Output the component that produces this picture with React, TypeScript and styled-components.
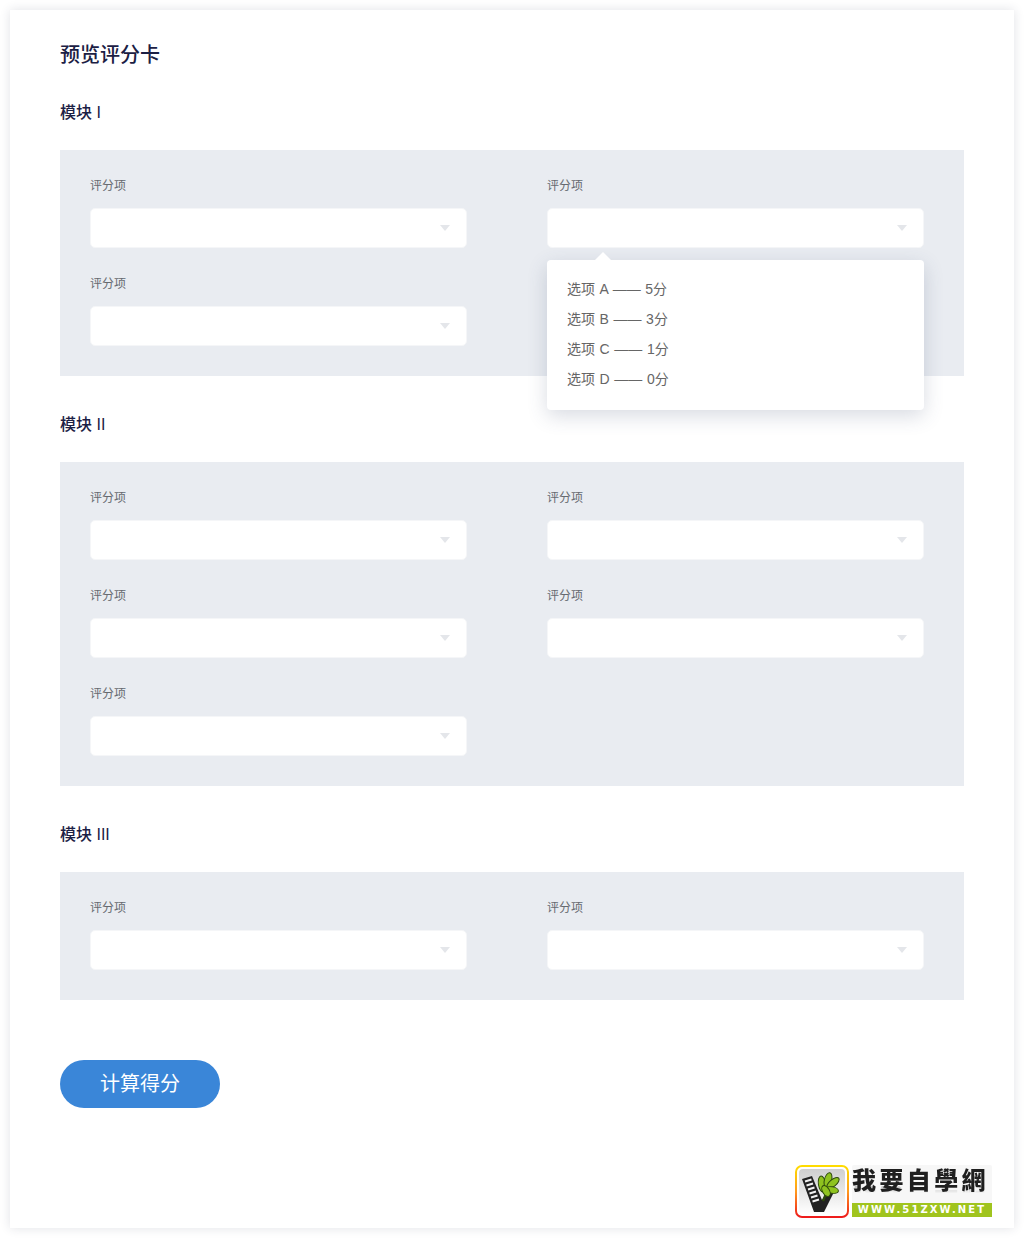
import React from "react";
import styled, { createGlobalStyle } from "styled-components";

const Global = createGlobalStyle`
  html, body { margin: 0; padding: 0; background: #ffffff; }
  body { font-family: "Liberation Sans", "Noto Sans CJK SC", sans-serif; }
`;

const Page = styled.div`
  box-sizing: border-box;
  width: 1024px;
  height: 1238px;
  padding: 10px;
`;

const Card = styled.main`
  position: relative;
  box-sizing: border-box;
  width: 1004px;
  height: 1218px;
  padding: 31px 50px 30px;
  background: #fff;
  box-shadow: 0 0 10px rgba(40, 50, 80, 0.14);
`;

const Title = styled.h1`
  margin: 0;
  font-size: 20px;
  line-height: 28px;
  font-weight: 500;
  color: #1b2044;
`;

const SectionTitle = styled.h2<{ $first?: boolean }>`
  margin: ${(p) => (p.$first ? "33px" : "38px")} 0 26px;
  font-size: 16px;
  line-height: 22px;
  font-weight: 500;
  color: #1b2044;
`;

const Panel = styled.section`
  display: grid;
  grid-template-columns: 377px 377px;
  column-gap: 80px;
  row-gap: 28px;
  padding: 28px 40px 30px 30px;
  background: #e9ecf1;
`;

const Field = styled.div`
  position: relative;
`;

const Label = styled.div`
  padding-top: 1px;
  margin-bottom: 15px;
  font-size: 12px;
  line-height: 14px;
  color: #666a70;
`;

const Select = styled.div`
  position: relative;
  box-sizing: border-box;
  height: 40px;
  background: #fff;
  border: 1px solid #f5f6f8;
  border-radius: 5px;
`;

const Caret = styled.span`
  position: absolute;
  right: 16px;
  top: 16px;
  width: 0;
  height: 0;
  border-left: 5px solid transparent;
  border-right: 5px solid transparent;
  border-top: 6px solid #e4e6ea;
`;

const Menu = styled.ul`
  position: absolute;
  z-index: 2;
  left: 0;
  top: 82px;
  box-sizing: border-box;
  width: 377px;
  height: 150px;
  margin: 0;
  padding: 14px 20px;
  list-style: none;
  background: #fff;
  border-radius: 4px;
  box-shadow: 0 6px 20px rgba(60, 75, 110, 0.2);

  &::before {
    content: "";
    position: absolute;
    left: 48px;
    top: -8px;
    width: 0;
    height: 0;
    border-left: 8px solid transparent;
    border-right: 8px solid transparent;
    border-bottom: 8px solid #fff;
  }
`;

const MenuItem = styled.li`
  font-size: 14px;
  line-height: 30px;
  color: #666;
  white-space: nowrap;
  word-spacing: 0.7px;
`;

const Submit = styled.button`
  display: block;
  width: 160px;
  height: 48px;
  margin-top: 60px;
  padding: 0;
  border: 0;
  border-radius: 24px;
  background: #3a86d8;
  color: #fff;
  font: 400 20px/48px "Liberation Sans", "Noto Sans CJK SC", sans-serif;
`;

const Watermark = styled.div`
  position: absolute;
  left: 785px;
  top: 1155px;
  display: flex;
  gap: 3px;
  align-items: stretch;
`;

const LogoWords = styled.div`
  display: flex;
  flex-direction: column;
  justify-content: space-between;
  width: 140px;
  height: 52px;
  background: #f7f7f7;
  border-radius: 2px;
`;

const LogoName = styled.div`
  font: 900 24px/28px "Noto Sans CJK TC", sans-serif;
  letter-spacing: 3.4px;
  color: #1f1f1f;
  white-space: nowrap;
  -webkit-box-reflect: below -8px linear-gradient(transparent 70%, rgba(255, 255, 255, 0.3));
`;

const LogoUrl = styled.div`
  height: 14px;
  background: #a0c41e;
  color: #fff;
  font: 700 10px/14px "DejaVu Sans", sans-serif;
  letter-spacing: 2.1px;
  text-align: center;
  white-space: nowrap;
`;

const options = ["选项 A —— 5分", "选项 B —— 3分", "选项 C —— 1分", "选项 D —— 0分"];

const Item: React.FC<{ open?: boolean }> = ({ open }) => (
  <Field>
    <Label>评分项</Label>
    <Select>
      <Caret />
    </Select>
    {open && (
      <Menu>
        {options.map((o) => (
          <MenuItem key={o}>{o}</MenuItem>
        ))}
      </Menu>
    )}
  </Field>
);

const lobes = [
  { cx: 27, cy: 19, rx: 3.6, ry: 8, r: -8 },
  { cx: 33, cy: 15, rx: 3.6, ry: 7.5, r: 15 },
  { cx: 38, cy: 18, rx: 3.4, ry: 7.5, r: 50 },
  { cx: 37, cy: 25, rx: 3.2, ry: 6.5, r: 100 },
  { cx: 31, cy: 26, rx: 3.4, ry: 6, r: 150 },
];

const LogoMark = () => (
  <svg width="54" height="53" viewBox="0 0 54 53" aria-hidden="true">
    <defs>
      <linearGradient id="rim" x1="0" y1="0" x2="0" y2="1">
        <stop offset="0" stopColor="#ffdc00" />
        <stop offset="0.5" stopColor="#ff9a1e" />
        <stop offset="1" stopColor="#ee1c1c" />
      </linearGradient>
      <linearGradient id="fill" x1="0" y1="0" x2="0" y2="1">
        <stop offset="0" stopColor="#cfcfcf" />
        <stop offset="1" stopColor="#ffffff" />
      </linearGradient>
    </defs>
    <rect x="1" y="1" width="52" height="51" rx="6" fill="#fff" stroke="url(#rim)" strokeWidth="2" />
    <rect x="4" y="4" width="46" height="45" rx="4" fill="url(#fill)" />
    <path d="M7 14 L17 11 L27 35 L32 27 L39 27 L29 47 L19 47 Z" fill="#222" />
    <path
      d="M10 16.5 L16.5 14.5 M11.5 20.5 L18 18.5 M13 24.5 L19.5 22.5 M14.5 28.5 L21 26.5 M16 32.5 L22.5 30.5 M17.5 36.5 L24 34.5"
      stroke="#f2f2f2"
      strokeWidth="2"
    />
    <path d="M28 36 L33 24" stroke="#2d4a0c" strokeWidth="2.4" />
    {lobes.map((l) => (
      <ellipse
        key={l.r}
        cx={l.cx}
        cy={l.cy}
        rx={l.rx}
        ry={l.ry}
        transform={`rotate(${l.r} ${l.cx} ${l.cy})`}
        fill="#8fc31f"
        stroke="#2d4a0c"
        strokeWidth="1"
      />
    ))}
  </svg>
);

export default function App() {
  return (
    <Page>
      <Global />
      <Card>
        <Title>预览评分卡</Title>

        <SectionTitle $first>模块 I</SectionTitle>
        <Panel>
          <Item />
          <Item open />
          <Item />
        </Panel>

        <SectionTitle>模块 II</SectionTitle>
        <Panel>
          <Item />
          <Item />
          <Item />
          <Item />
          <Item />
        </Panel>

        <SectionTitle>模块 III</SectionTitle>
        <Panel>
          <Item />
          <Item />
        </Panel>

        <Submit>计算得分</Submit>

        <Watermark>
          <LogoMark />
          <LogoWords>
            <LogoName>我要自學網</LogoName>
            <LogoUrl>WWW.51ZXW.NET</LogoUrl>
          </LogoWords>
        </Watermark>
      </Card>
    </Page>
  );
}
